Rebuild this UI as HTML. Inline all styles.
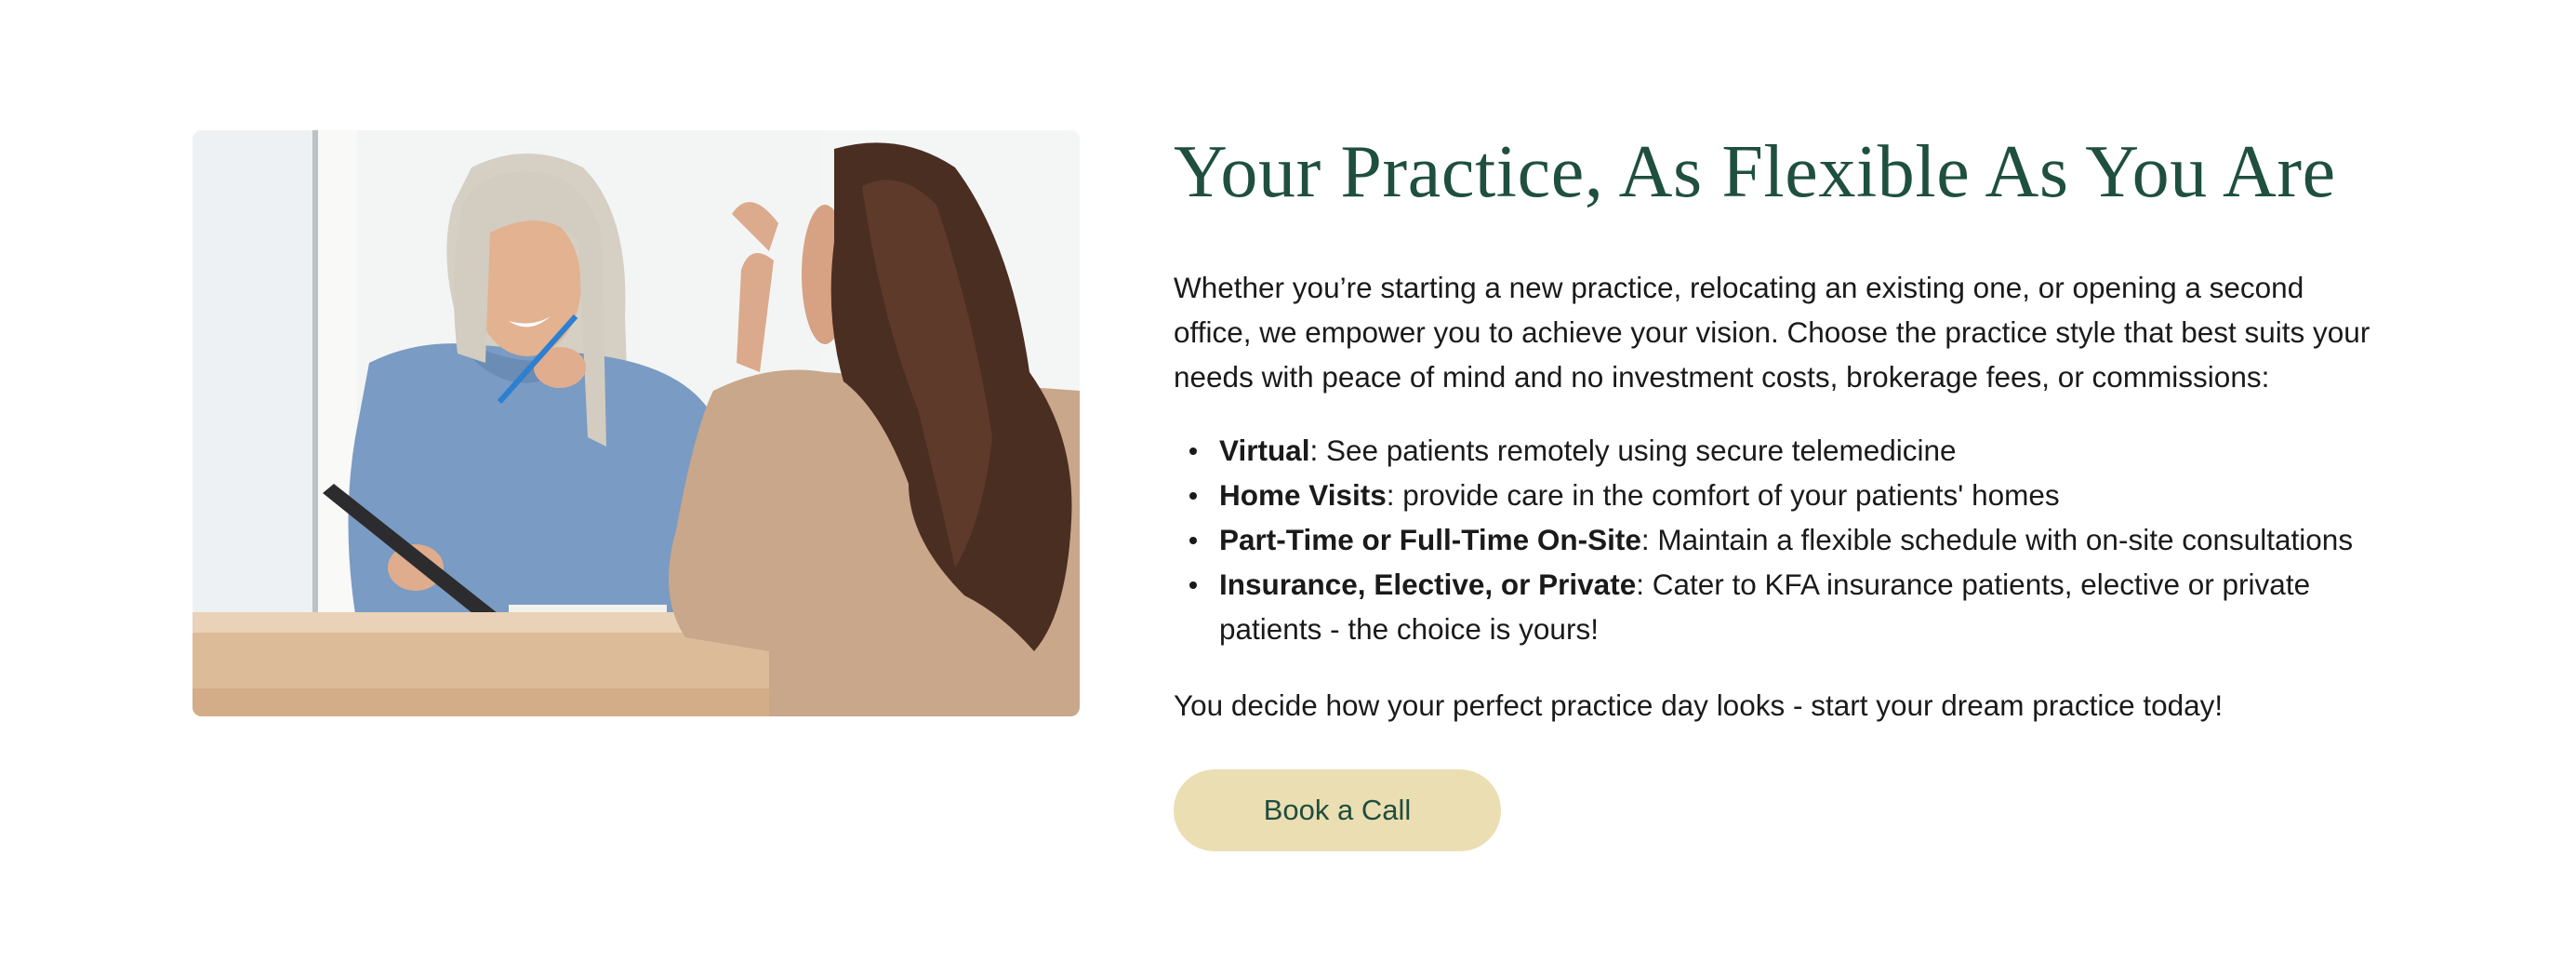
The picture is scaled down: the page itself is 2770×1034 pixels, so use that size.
<!DOCTYPE html>
<html><head><meta charset="utf-8"><style>
html,body{margin:0;padding:0;background:#fff;width:2770px;height:1034px;overflow:hidden}
.img{position:absolute;left:207px;top:140px;width:954px;height:630px;border-radius:10px;overflow:hidden}
h1{position:absolute;left:1262px;top:140px;margin:0;font-family:"Liberation Serif",serif;font-weight:400;font-size:80px;color:#1f4f3f;white-space:nowrap;letter-spacing:0.6px}
.t{position:absolute;left:1262px;font-family:"Liberation Sans",sans-serif;font-size:31.5px;color:#1a1a1a;white-space:nowrap;line-height:48px}
.t b{font-weight:700}
ul{margin:0;padding:0;list-style:none}
li{position:relative;padding-left:49px}
li:before{content:"";position:absolute;left:17px;top:21px;width:8px;height:8px;border-radius:50%;background:#1a1a1a}
.btn{position:absolute;left:1262px;top:827px;width:352px;height:88px;border-radius:44px;background:#ebdeb2;color:#1f4d3d;font-family:"Liberation Sans",sans-serif;font-size:31px;font-weight:500;display:flex;align-items:center;justify-content:center}
</style></head><body>
<div class="img"><svg width="954" height="630" viewBox="0 0 954 630">
<rect width="954" height="630" fill="#f4f6f6"/>
<rect x="0" y="0" width="130" height="630" fill="#eef1f3"/>
<rect x="129" y="0" width="6" height="520" fill="#b9c2c5"/>
<rect x="135" y="0" width="42" height="520" fill="#f9f9f8"/>
<rect x="177" y="0" width="500" height="520" fill="#f3f5f4"/>
<path d="M300 40 Q360 10 420 40 Q470 90 465 200 L470 340 L440 300 L300 250 Q260 150 280 80Z" fill="#d6cfc4"/>
<path d="M190 250 Q240 225 300 230 L420 240 Q520 250 555 300 L560 500 L530 520 L175 520 Q160 420 175 330Z" fill="#7a9bc3"/>
<path d="M290 235 Q350 300 410 250 L420 240 Q360 260 300 230Z" fill="#6b8cb5"/>
<ellipse cx="360" cy="165" rx="58" ry="78" fill="#e2b291"/>
<path d="M340 205 Q362 220 385 200 Q365 212 340 205Z" fill="#fff"/>
<path d="M290 80 Q310 40 370 45 Q420 50 440 110 L445 340 L425 330 L415 120 Q380 80 320 110 L315 250 L285 240 Q275 160 290 80Z" fill="#d3ccc0"/>
<ellipse cx="395" cy="255" rx="28" ry="22" fill="#e0ad8e"/>
<ellipse cx="240" cy="470" rx="30" ry="25" fill="#dfac8d"/>
<line x1="330" y1="292" x2="412" y2="200" stroke="#2d7fd0" stroke-width="6"/>
<path d="M140 390 L152 380 L352 538 L342 552Z" fill="#2c2c2e"/>
<rect x="340" y="510" width="170" height="25" fill="#f3f1ec"/>
<rect x="0" y="518" width="640" height="112" fill="#dcbb98"/>
<rect x="0" y="518" width="640" height="22" fill="#e9d2b8"/>
<rect x="0" y="600" width="640" height="30" fill="#d2ad88"/>
<path d="M560 280 Q620 250 680 260 L954 280 L954 630 L620 630 L620 560 L530 545 Q500 500 520 430 Q540 320 560 280Z" fill="#c8a78a"/>
<path d="M580 90 Q600 60 630 100 L620 130 Z" fill="#dcaa8c"/>
<path d="M590 150 Q600 120 625 140 L610 260 L585 250Z" fill="#dba98b"/>
<ellipse cx="680" cy="155" rx="25" ry="75" fill="#d7a184"/>
<path d="M690 20 Q760 0 820 40 Q880 120 900 260 Q950 330 945 420 Q940 520 905 560 Q870 520 830 500 Q770 440 770 380 Q740 300 700 270 Q680 200 690 120 Z" fill="#4b2e22"/>
<path d="M720 60 Q760 40 800 80 Q840 200 860 330 Q850 420 820 470 Q800 380 780 300 Q740 200 720 60Z" fill="#5e3a2a"/>
</svg></div>
<h1>Your Practice, As Flexible As You Are</h1>
<div class="t" style="top:285px">Whether you’re starting a new practice, relocating an existing one, or opening a second<br>office, we empower you to achieve your vision. Choose the practice style that best suits your<br>needs with peace of mind and no investment costs, brokerage fees, or commissions:</div>
<ul class="t" style="top:460px">
<li><b>Virtual</b>: See patients remotely using secure telemedicine</li>
<li><b>Home Visits</b>: provide care in the comfort of your patients' homes</li>
<li><b>Part-Time or Full-Time On-Site</b>: Maintain a flexible schedule with on-site consultations</li>
<li><b>Insurance, Elective, or Private</b>: Cater to KFA insurance patients, elective or private<br>patients - the choice is yours!</li>
</ul>
<div class="t" style="top:734px">You decide how your perfect practice day looks - start your dream practice today!</div>
<div class="btn">Book a Call</div>
</body></html>
